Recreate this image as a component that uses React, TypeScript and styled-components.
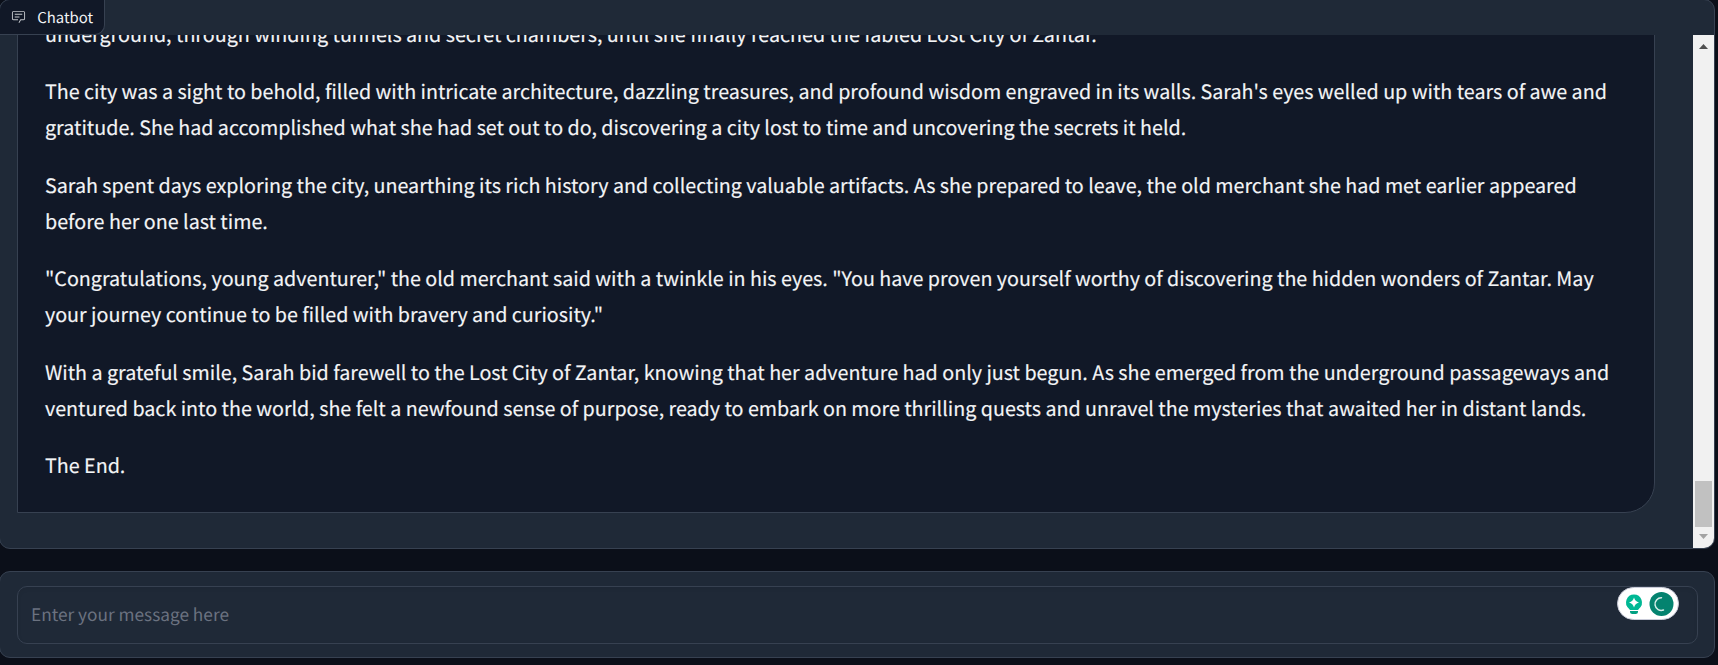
import React from "react";
import styled, { createGlobalStyle } from "styled-components";

const GlobalStyle = createGlobalStyle`
  * { box-sizing: border-box; }
  html, body { margin: 0; height: 100%; overflow: hidden; background: #0b0f19; }
  body {
    font-family: "Noto Sans CJK SC", "Noto Sans", sans-serif;
    text-rendering: geometricPrecision;
  }
`;

const Page = styled.main`
  width: 1716px;
  margin: -1px 0 0 -1px;
  display: flex;
  flex-direction: column;
  gap: 22px;
`;

const Panel = styled.section`
  border: 1px solid #374151;
  border-radius: 11px;
  background: #1f2937;
  overflow: hidden;
`;

const ChatPanel = styled(Panel)`
  height: 550px;
  display: flex;
  flex-direction: column;
`;

const Header = styled.header`
  height: 35px;
  flex: none;
`;

const Label = styled.div`
  display: inline-flex;
  align-items: center;
  gap: 11.3px;
  height: 35px;
  width: 105px;
  padding: 1px 0 0 11px;
  border: solid #374151;
  border-width: 0 1px 1px 0;
  border-radius: 0 0 10px 0;
  background: #111827;
  color: #f3f4f6;
  font-size: 14.9px;
  line-height: 24px;
  white-space: nowrap;
`;

const Body = styled.div`
  flex: 1;
  min-height: 0;
  display: flex;
  justify-content: space-between;
`;

const Log = styled.div`
  width: 1655px;
  padding: 0 0 35px 17px;
  display: flex;
  flex-direction: column;
  justify-content: flex-end;
  overflow: hidden;
`;

const Message = styled.article`
  flex: none;
  border: 1px solid #374151;
  border-radius: 30px 30px 30px 0;
  background: #111827;
  color: #f3f4f6;
  padding: 27px 0 28.6px 27px;
  font-size: 19.71px;
  line-height: 36px;
  -webkit-text-stroke: 0.15px currentColor;
`;

const Paragraph = styled.p`
  margin: 0 0 21.6px;
  white-space: pre-line;
  &:first-child { margin-bottom: 21px; }
  &:last-child { margin-bottom: 0; }
`;

const Scrollbar = styled.div`
  width: 21px;
  padding: 9px 2px 9px;
  display: flex;
  flex-direction: column;
  align-items: center;
  background: #f1f1f1;
`;

const Thumb = styled.div`
  width: 17px;
  height: 46px;
  margin: auto 0 7px;
  background: #c1c1c1;
`;

const Arrow = styled.svg`
  display: block;
  width: 9px;
  height: 5px;
`;

const InputPanel = styled(Panel)`
  height: 87px;
  padding: 14px 16px 14px 17px;
`;

const Field = styled.div`
  height: 58px;
  display: flex;
  align-items: center;
  justify-content: space-between;
  padding: 0 18px 2px 13px;
  border: 1px solid #374151;
  border-radius: 10px;
  box-shadow: inset 0 2px 4px rgba(0, 0, 0, 0.05);
  color: #6b7280;
  font-size: 17.28px;
  line-height: 28px;
`;

const Assistant = styled.div`
  width: 62px;
  height: 33px;
  margin-top: -22px;
  border: 1px solid #c9cbd8;
  border-radius: 17px;
  background: #fff;
`;

const LabelIcon = styled.svg`
  width: 15px;
  height: 15px;
  margin-top: -2px;
  fill: #c3c6cc;
`;

const IconPair = styled.svg`
  display: block;
  width: 60px;
  height: 31px;
`;

const ChatIcon = () => (
  <LabelIcon viewBox="0 0 32 32">
    <path d="M17.74 30L16 29l4-7h6a2 2 0 0 0 2-2V8a2 2 0 0 0-2-2H6a2 2 0 0 0-2 2v12a2 2 0 0 0 2 2h9v2H6a4 4 0 0 1-4-4V8a4 4 0 0 1 4-4h20a4 4 0 0 1 4 4v12a4 4 0 0 1-4 4h-4.84Z" />
    <path d="M8 10h16v2H8zm0 6h10v2H8z" />
  </LabelIcon>
);

const AssistantIcons = () => (
  <IconPair viewBox="0 0 60 31">
    <path d="M16 6.5a8 8 0 0 0-5 14.2l1 1.3h8l1-1.3A8 8 0 0 0 16 6.5Z" fill="#00b894" />
    <path d="M16 9.500q1 4 5 5q-4 1-5 5q-1-4-5-5q4-1 5-5Z" fill="#fff" />
    <path d="M12 23h8v.5a2.500 2.500 0 0 1-2.500 2.500h-3a2.500 2.500 0 0 1-2.500-2.500Z" fill="#00a082" />
    <circle cx="43.500" cy="16" r="12" fill="#04836f" />
    <path d="M43.500 9.800a6.300 6.300 0 1 0 2 12.200" fill="none" stroke="#d5eee9" strokeWidth="1.500" strokeLinecap="round" />
  </IconPair>
);

const story = [
  "underground, through winding tunnels and secret chambers, until she finally reached the fabled Lost City of Zantar.",
  "The city was a sight to behold, filled with intricate architecture, dazzling treasures, and profound wisdom engraved in its walls. Sarah's eyes welled up with tears of awe and\ngratitude. She had accomplished what she had set out to do, discovering a city lost to time and uncovering the secrets it held.",
  "Sarah spent days exploring the city, unearthing its rich history and collecting valuable artifacts. As she prepared to leave, the old merchant she had met earlier appeared\nbefore her one last time.",
  "\"Congratulations, young adventurer,\" the old merchant said with a twinkle in his eyes. \"You have proven yourself worthy of discovering the hidden wonders of Zantar. May\nyour journey continue to be filled with bravery and curiosity.\"",
  "With a grateful smile, Sarah bid farewell to the Lost City of Zantar, knowing that her adventure had only just begun. As she emerged from the underground passageways and\nventured back into the world, she felt a newfound sense of purpose, ready to embark on more thrilling quests and unravel the mysteries that awaited her in distant lands.",
  "The End.",
];

export default function App() {
  return (
    <>
      <GlobalStyle />
      <Page>
        <ChatPanel>
          <Header>
            <Label>
              <ChatIcon />
              Chatbot
            </Label>
          </Header>
          <Body>
            <Log>
              <Message>
                {story.map((text) => (
                  <Paragraph key={text}>{text}</Paragraph>
                ))}
              </Message>
            </Log>
            <Scrollbar>
              <Arrow viewBox="0 0 9 5"><path d="M0 5 4.500 0 9 5Z" fill="#505050" /></Arrow>
              <Thumb />
              <Arrow viewBox="0 0 9 5"><path d="M0 0 4.500 5 9 0Z" fill="#a3a3a3" /></Arrow>
            </Scrollbar>
          </Body>
        </ChatPanel>
        <InputPanel>
          <Field>
            Enter your message here
            <Assistant>
              <AssistantIcons />
            </Assistant>
          </Field>
        </InputPanel>
      </Page>
    </>
  );
}
